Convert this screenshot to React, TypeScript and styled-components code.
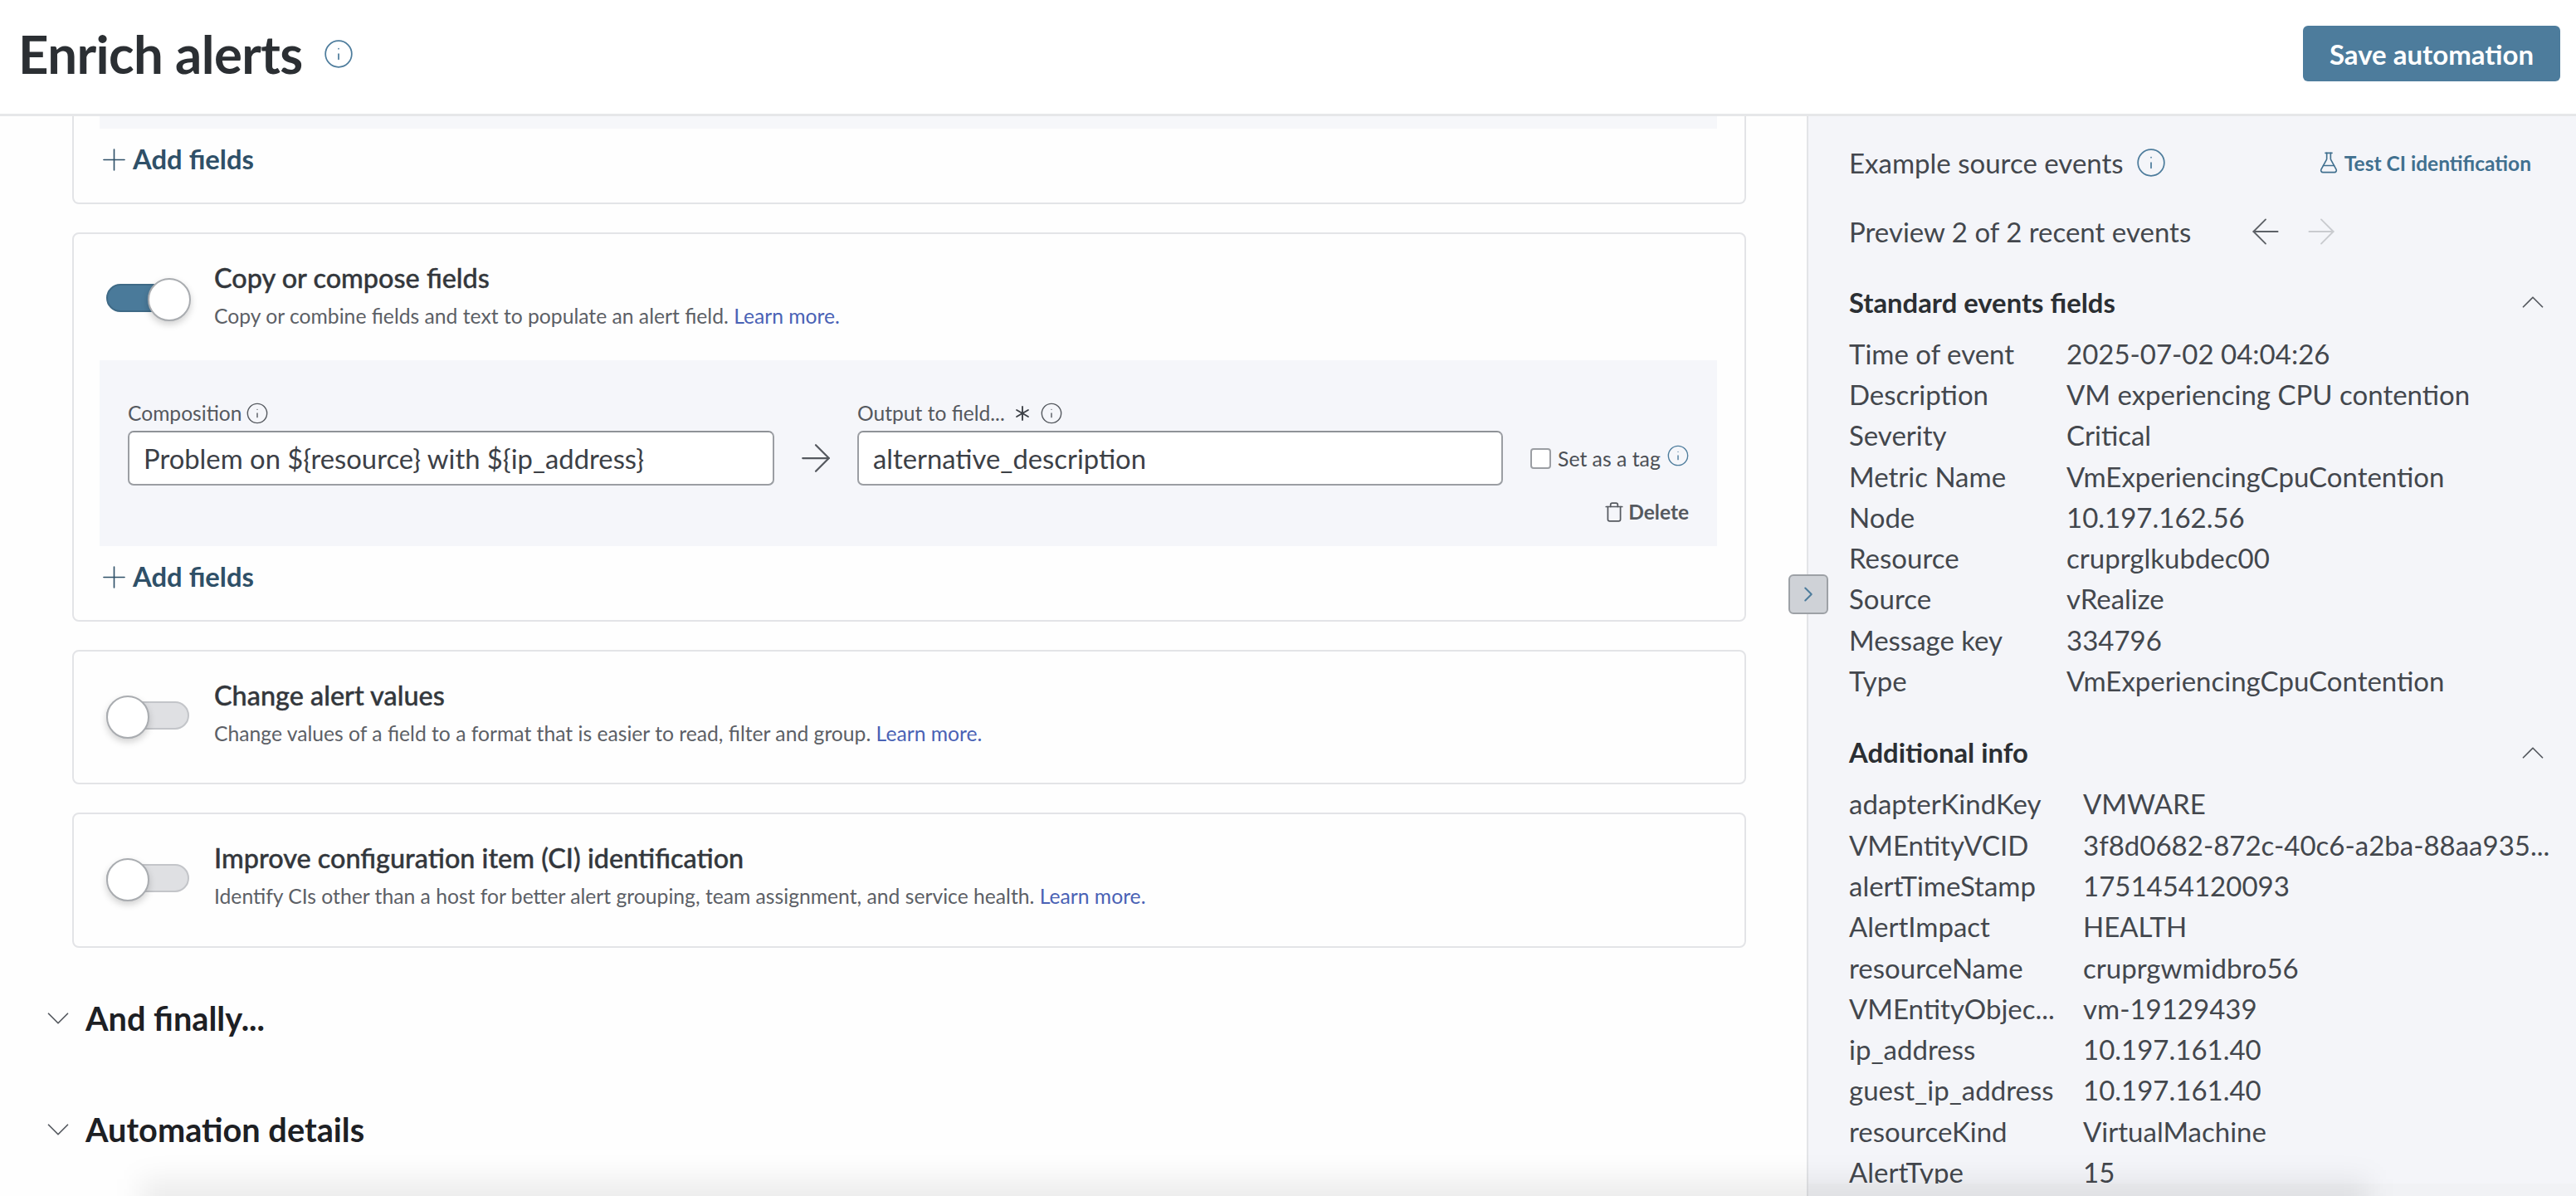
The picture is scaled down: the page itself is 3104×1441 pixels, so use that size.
import React from 'react';
import styled, { createGlobalStyle } from 'styled-components';
import { ArrowLeft, ArrowRight, Asterisk, ChevronDown, ChevronRight, ChevronUp, FlaskConical, Info, Plus, Trash } from 'lucide-react';

const GlobalStyle = createGlobalStyle`
    html, body {
        margin: 0;
        padding: 0;
        background: #fefefe;
    }
    * {
        box-sizing: border-box;
    }
`;

const Page = styled.div`
    position: relative;
    width: 3104px;
    height: 1441px;
    overflow: hidden;
    display: flex;
    flex-direction: column;
    background: #fefefe;
    color: #33373c;
    font-family: Lato, 'Liberation Sans', sans-serif;
`;

const Header = styled.header`
    flex: none;
    height: 140px;
    display: flex;
    align-items: center;
    justify-content: space-between;
    padding: 0 19px 8px 22px;
    background: #fff;
    border-bottom: 3px solid #e6e7e9;
`;

const TitleRow = styled.div`
    display: flex;
    align-items: center;
    gap: 24px;
`;

const Title = styled.h1`
    margin: 0;
    font-size: 63.5px;
    line-height: 72px;
    font-weight: 700;
    letter-spacing: -0.6px;
    color: #2b2f33;
`;

const SaveButton = styled.button`
    width: 310px;
    height: 67px;
    border: none;
    border-radius: 6px;
    background: #4d7c9c;
    color: #fff;
    font-family: inherit;
    font-size: 33px;
    font-weight: 700;
`;

const Body = styled.div`
    flex: 1;
    display: flex;
    min-height: 0;
`;

const Main = styled.main`
    width: 2177px;
    flex: none;
    padding: 0 73px 0 87px;
    display: flex;
    flex-direction: column;
    gap: 34px;
    overflow: hidden;
`;

const Card = styled.section<{ $height: number; $clipped?: boolean }>`
    flex: none;
    height: ${(p) => p.$height}px;
    background: #fefefe;
    border: 2px solid #e3e4e7;
    border-top-width: ${(p) => (p.$clipped ? 0 : 2)}px;
    border-radius: ${(p) => (p.$clipped ? '0 0 8px 8px' : '8px')};
    padding: ${(p) => (p.$clipped ? '0' : '34px')} 33px 0 39px;
`;

const TopStrip = styled.div`
    height: 15px;
    margin-left: -8px;
    background: #f6f7fa;
`;

const AddFields = styled.button<{ $top: number }>`
    display: flex;
    align-items: center;
    gap: 1px;
    height: 40px;
    margin: ${(p) => p.$top}px 0 0 -12px;
    padding: 0;
    border: none;
    background: none;
    color: #2f5068;
    font-family: inherit;
    font-size: 32.8px;
    line-height: 40px;
    font-weight: 700;
`;

const FeatureRow = styled.div`
    display: flex;
    align-items: center;
    gap: 30px;
`;

const Toggle = styled.span<{ $on?: boolean }>`
    position: relative;
    top: 3px;
    flex: none;
    display: block;
    width: 100px;
    height: 34px;
    border-radius: 17px;
    background: ${(p) => (p.$on ? '#4a7a9a' : '#dfe0e3')};
    border: 2px solid ${(p) => (p.$on ? '#3f6a86' : '#c3c5c9')};

    &::after {
        content: '';
        position: absolute;
        top: -9px;
        left: ${(p) => (p.$on ? '48px' : '-2px')};
        width: 48px;
        height: 48px;
        border-radius: 50%;
        background: #fff;
        border: 2px solid #a9acb0;
        box-shadow: 0 4px 8px rgba(0, 0, 0, 0.18);
    }
`;

const FeatureText = styled.div`
    display: flex;
    flex-direction: column;
    gap: 12px;
`;

const FeatureTitle = styled.div`
    font-size: 32.4px;
    line-height: 38px;
    font-weight: 500;
    color: #33373c;
    -webkit-text-stroke: 0.4px #33373c;
`;

const FeatureDesc = styled.div`
    font-size: 24.7px;
    line-height: 30px;
    color: #5c6066;
`;

const Learn = styled.a`
    color: #4a62b5;
`;

const Composer = styled.div`
    margin: 38px 0 0 -8px;
    height: 224px;
    background: #f5f6fa;
    padding: 48px 34px 0;
`;

const ComposerRow = styled.div`
    display: flex;
    align-items: flex-end;
`;

const Field = styled.div<{ $width: number }>`
    flex: none;
    width: ${(p) => p.$width}px;
    display: flex;
    flex-direction: column;
    gap: 5px;
`;

const FieldLabel = styled.label`
    display: flex;
    align-items: center;
    gap: 5px;
    height: 32px;
    font-size: 24.6px;
    line-height: 32px;
    color: #55595f;
`;

const Required = styled.span`
    display: flex;
    color: #3c4046;
`;

const Input = styled.div`
    height: 66px;
    display: flex;
    align-items: center;
    padding: 0 17px;
    background: #fff;
    border: 2px solid #9b9ea3;
    border-top-color: #8f9297;
    border-radius: 7px;
    font-size: 32.8px;
    color: #3c4046;
`;

const Arrow = styled.div`
    flex: none;
    width: 100px;
    height: 66px;
    display: flex;
    align-items: center;
    justify-content: center;
    color: #55595f;
`;

const TagBox = styled.div`
    height: 66px;
    margin-left: 33px;
    display: flex;
    align-items: center;
    gap: 8px;
    font-size: 24.8px;
    white-space: nowrap;
    color: #4b4f55;
`;

const Checkbox = styled.span`
    flex: none;
    width: 25px;
    height: 25px;
    background: #fff;
    border: 2px solid #9b9ea3;
    border-radius: 4px;
`;

const TagInfo = styled.span`
    display: flex;
    margin: -6px 0 0 -1px;
    color: #4d7c9c;
`;

const DeleteRow = styled.div`
    display: flex;
    justify-content: flex-end;
    align-items: center;
    gap: 4px;
    height: 34px;
    margin-top: 15px;
    font-size: 24.5px;
    line-height: 34px;
    font-weight: 700;
    color: #55595f;
`;

const Section = styled.div<{ $top: number }>`
    display: flex;
    align-items: center;
    gap: 10px;
    height: 48px;
    margin: ${(p) => p.$top}px 0 0 -40px;
    font-size: 39.7px;
    line-height: 48px;
    font-weight: 700;
    color: #1d2024;
`;

const Aside = styled.aside`
    position: relative;
    flex: 1;
    min-width: 0;
    padding: 31px 0 0 49px;
    background: #f4f5f9;
    border-left: 2px solid #e3e4e7;
    font-size: 33px;
    color: #43474d;
    overflow: hidden;

    &::after {
        content: '';
        position: absolute;
        left: 0;
        right: 0;
        bottom: 0;
        height: 15px;
        background: #f1f2f5;
    }
`;

const AsideTop = styled.div`
    display: flex;
    align-items: center;
    justify-content: space-between;
    height: 50px;
    padding-right: 54px;
`;

const AsideTitle = styled.div`
    display: flex;
    align-items: center;
    gap: 14px;
`;

const TestLink = styled.div`
    display: flex;
    align-items: center;
    gap: 5px;
    font-size: 24.5px;
    font-weight: 700;
    color: #41708f;
`;

const Preview = styled.div`
    display: flex;
    align-items: center;
    height: 50px;
    margin-top: 33px;
    gap: 65px;
`;

const Arrows = styled.div`
    display: flex;
    gap: 17px;
    color: #5d6167;
`;

const DimIcon = styled.span`
    display: flex;
    color: #c9cbcf;
`;

const GroupHead = styled.div<{ $top: number }>`
    display: flex;
    align-items: center;
    justify-content: space-between;
    height: 40px;
    margin-top: ${(p) => p.$top}px;
    padding-right: 29px;
    font-size: 32.8px;
    font-weight: 700;
    color: #2b2f33;
`;

const Rows = styled.div<{ $labelWidth: number }>`
    display: grid;
    grid-template-columns: ${(p) => p.$labelWidth}px 1fr;
    grid-auto-rows: 49.3px;
    align-items: center;
    margin-top: 17px;
    white-space: nowrap;
`;

const Footer = styled.div`
    position: absolute;
    left: 170px;
    right: 250px;
    bottom: -30px;
    height: 50px;
    background: rgba(0, 0, 0, 0.07);
    filter: blur(16px);
    pointer-events: none;
`;

const Collapse = styled.button`
    position: absolute;
    left: 2155px;
    top: 692px;
    width: 48px;
    height: 48px;
    padding: 0;
    display: flex;
    align-items: center;
    justify-content: center;
    background: #cfd2d7;
    border: 2px solid #9da1a6;
    border-radius: 6px;
    color: #4d7c9c;
`;

const standardRows = [
    ['Time of event', '2025-07-02 04:04:26'],
    ['Description', 'VM experiencing CPU contention'],
    ['Severity', 'Critical'],
    ['Metric Name', 'VmExperiencingCpuContention'],
    ['Node', '10.197.162.56'],
    ['Resource', 'cruprglkubdec00'],
    ['Source', 'vRealize'],
    ['Message key', '334796'],
    ['Type', 'VmExperiencingCpuContention'],
];

const additionalRows = [
    ['adapterKindKey', 'VMWARE'],
    ['VMEntityVCID', '3f8d0682-872c-40c6-a2ba-88aa935...'],
    ['alertTimeStamp', '1751454120093'],
    ['AlertImpact', 'HEALTH'],
    ['resourceName', 'cruprgwmidbro56'],
    ['VMEntityObjec...', 'vm-19129439'],
    ['ip_address', '10.197.161.40'],
    ['guest_ip_address', '10.197.161.40'],
    ['resourceKind', 'VirtualMachine'],
    ['AlertType', '15'],
];

const App = () => {
    return (
        <Page>
            <GlobalStyle />
            <Header>
                <TitleRow>
                    <Title>Enrich alerts</Title>
                    <Info size={38} strokeWidth={1.1} color='#4d7c9c' />
                </TitleRow>
                <SaveButton>Save automation</SaveButton>
            </Header>
            <Body>
                <Main>
                    <Card $height={106} $clipped>
                        <TopStrip />
                        <AddFields $top={17}>
                            <Plus size={43} strokeWidth={0.9} />
                            Add fields
                        </AddFields>
                    </Card>
                    <Card $height={469}>
                        <FeatureRow>
                            <Toggle $on />
                            <FeatureText>
                                <FeatureTitle>Copy or compose fields</FeatureTitle>
                                <FeatureDesc>
                                    Copy or combine fields and text to populate an alert field. <Learn>Learn more.</Learn>
                                </FeatureDesc>
                            </FeatureText>
                        </FeatureRow>
                        <Composer>
                            <ComposerRow>
                                <Field $width={779}>
                                    <FieldLabel>
                                        Composition <Info size={28} strokeWidth={1.2} />
                                    </FieldLabel>
                                    <Input>{'Problem on ${resource} with ${ip_address}'}</Input>
                                </Field>
                                <Arrow>
                                    <ArrowRight size={54} strokeWidth={1} />
                                </Arrow>
                                <Field $width={778}>
                                    <FieldLabel>
                                        Output to field...
                                        <Required>
                                            <Asterisk size={32} strokeWidth={1.4} />
                                        </Required>
                                        <Info size={28} strokeWidth={1.2} />
                                    </FieldLabel>
                                    <Input>alternative_description</Input>
                                </Field>
                                <TagBox>
                                    <Checkbox />
                                    Set as a tag
                                    <TagInfo>
                                        <Info size={28} strokeWidth={1.2} />
                                    </TagInfo>
                                </TagBox>
                            </ComposerRow>
                            <DeleteRow>
                                <Trash size={26} strokeWidth={1.6} />
                                Delete
                            </DeleteRow>
                        </Composer>
                        <AddFields $top={17}>
                            <Plus size={43} strokeWidth={0.9} />
                            Add fields
                        </AddFields>
                    </Card>
                    <Card $height={162}>
                        <FeatureRow>
                            <Toggle />
                            <FeatureText>
                                <FeatureTitle>Change alert values</FeatureTitle>
                                <FeatureDesc>
                                    Change values of a field to a format that is easier to read, filter and group. <Learn>Learn more.</Learn>
                                </FeatureDesc>
                            </FeatureText>
                        </FeatureRow>
                    </Card>
                    <Card $height={163}>
                        <FeatureRow>
                            <Toggle />
                            <FeatureText>
                                <FeatureTitle>Improve configuration item (CI) identification</FeatureTitle>
                                <FeatureDesc>
                                    Identify CIs other than a host for better alert grouping, team assignment, and service health. <Learn>Learn more.</Learn>
                                </FeatureDesc>
                            </FeatureText>
                        </FeatureRow>
                    </Card>
                    <Section $top={27}>
                        <ChevronDown size={46} strokeWidth={0.9} color='#55595f' />
                        And finally...
                    </Section>
                    <Section $top={52}>
                        <ChevronDown size={46} strokeWidth={0.9} color='#55595f' />
                        Automation details
                    </Section>
                </Main>
                <Aside>
                    <AsideTop>
                        <AsideTitle>
                            Example source events
                            <Info size={38} strokeWidth={1.1} color='#4d7c9c' />
                        </AsideTitle>
                        <TestLink>
                            <FlaskConical size={28} strokeWidth={1.4} />
                            Test CI identification
                        </TestLink>
                    </AsideTop>
                    <Preview>
                        Preview 2 of 2 recent events
                        <Arrows>
                            <ArrowLeft size={50} strokeWidth={0.9} />
                            <DimIcon>
                                <ArrowRight size={50} strokeWidth={0.9} />
                            </DimIcon>
                        </Arrows>
                    </Preview>
                    <GroupHead $top={40}>
                        Standard events fields
                        <ChevronUp size={46} strokeWidth={0.9} color='#55595f' />
                    </GroupHead>
                    <Rows $labelWidth={262}>
                        {standardRows.map(([k, v]) => (
                            <React.Fragment key={k}>
                                <span>{k}</span>
                                <span>{v}</span>
                            </React.Fragment>
                        ))}
                    </Rows>
                    <GroupHead $top={42}>
                        Additional info
                        <ChevronUp size={46} strokeWidth={0.9} color='#55595f' />
                    </GroupHead>
                    <Rows $labelWidth={282}>
                        {additionalRows.map(([k, v]) => (
                            <React.Fragment key={k}>
                                <span>{k}</span>
                                <span>{v}</span>
                            </React.Fragment>
                        ))}
                    </Rows>
                </Aside>
            </Body>
            <Collapse>
                <ChevronRight size={30} strokeWidth={1.6} />
            </Collapse>
            <Footer />
        </Page>
    );
};

export default App;
